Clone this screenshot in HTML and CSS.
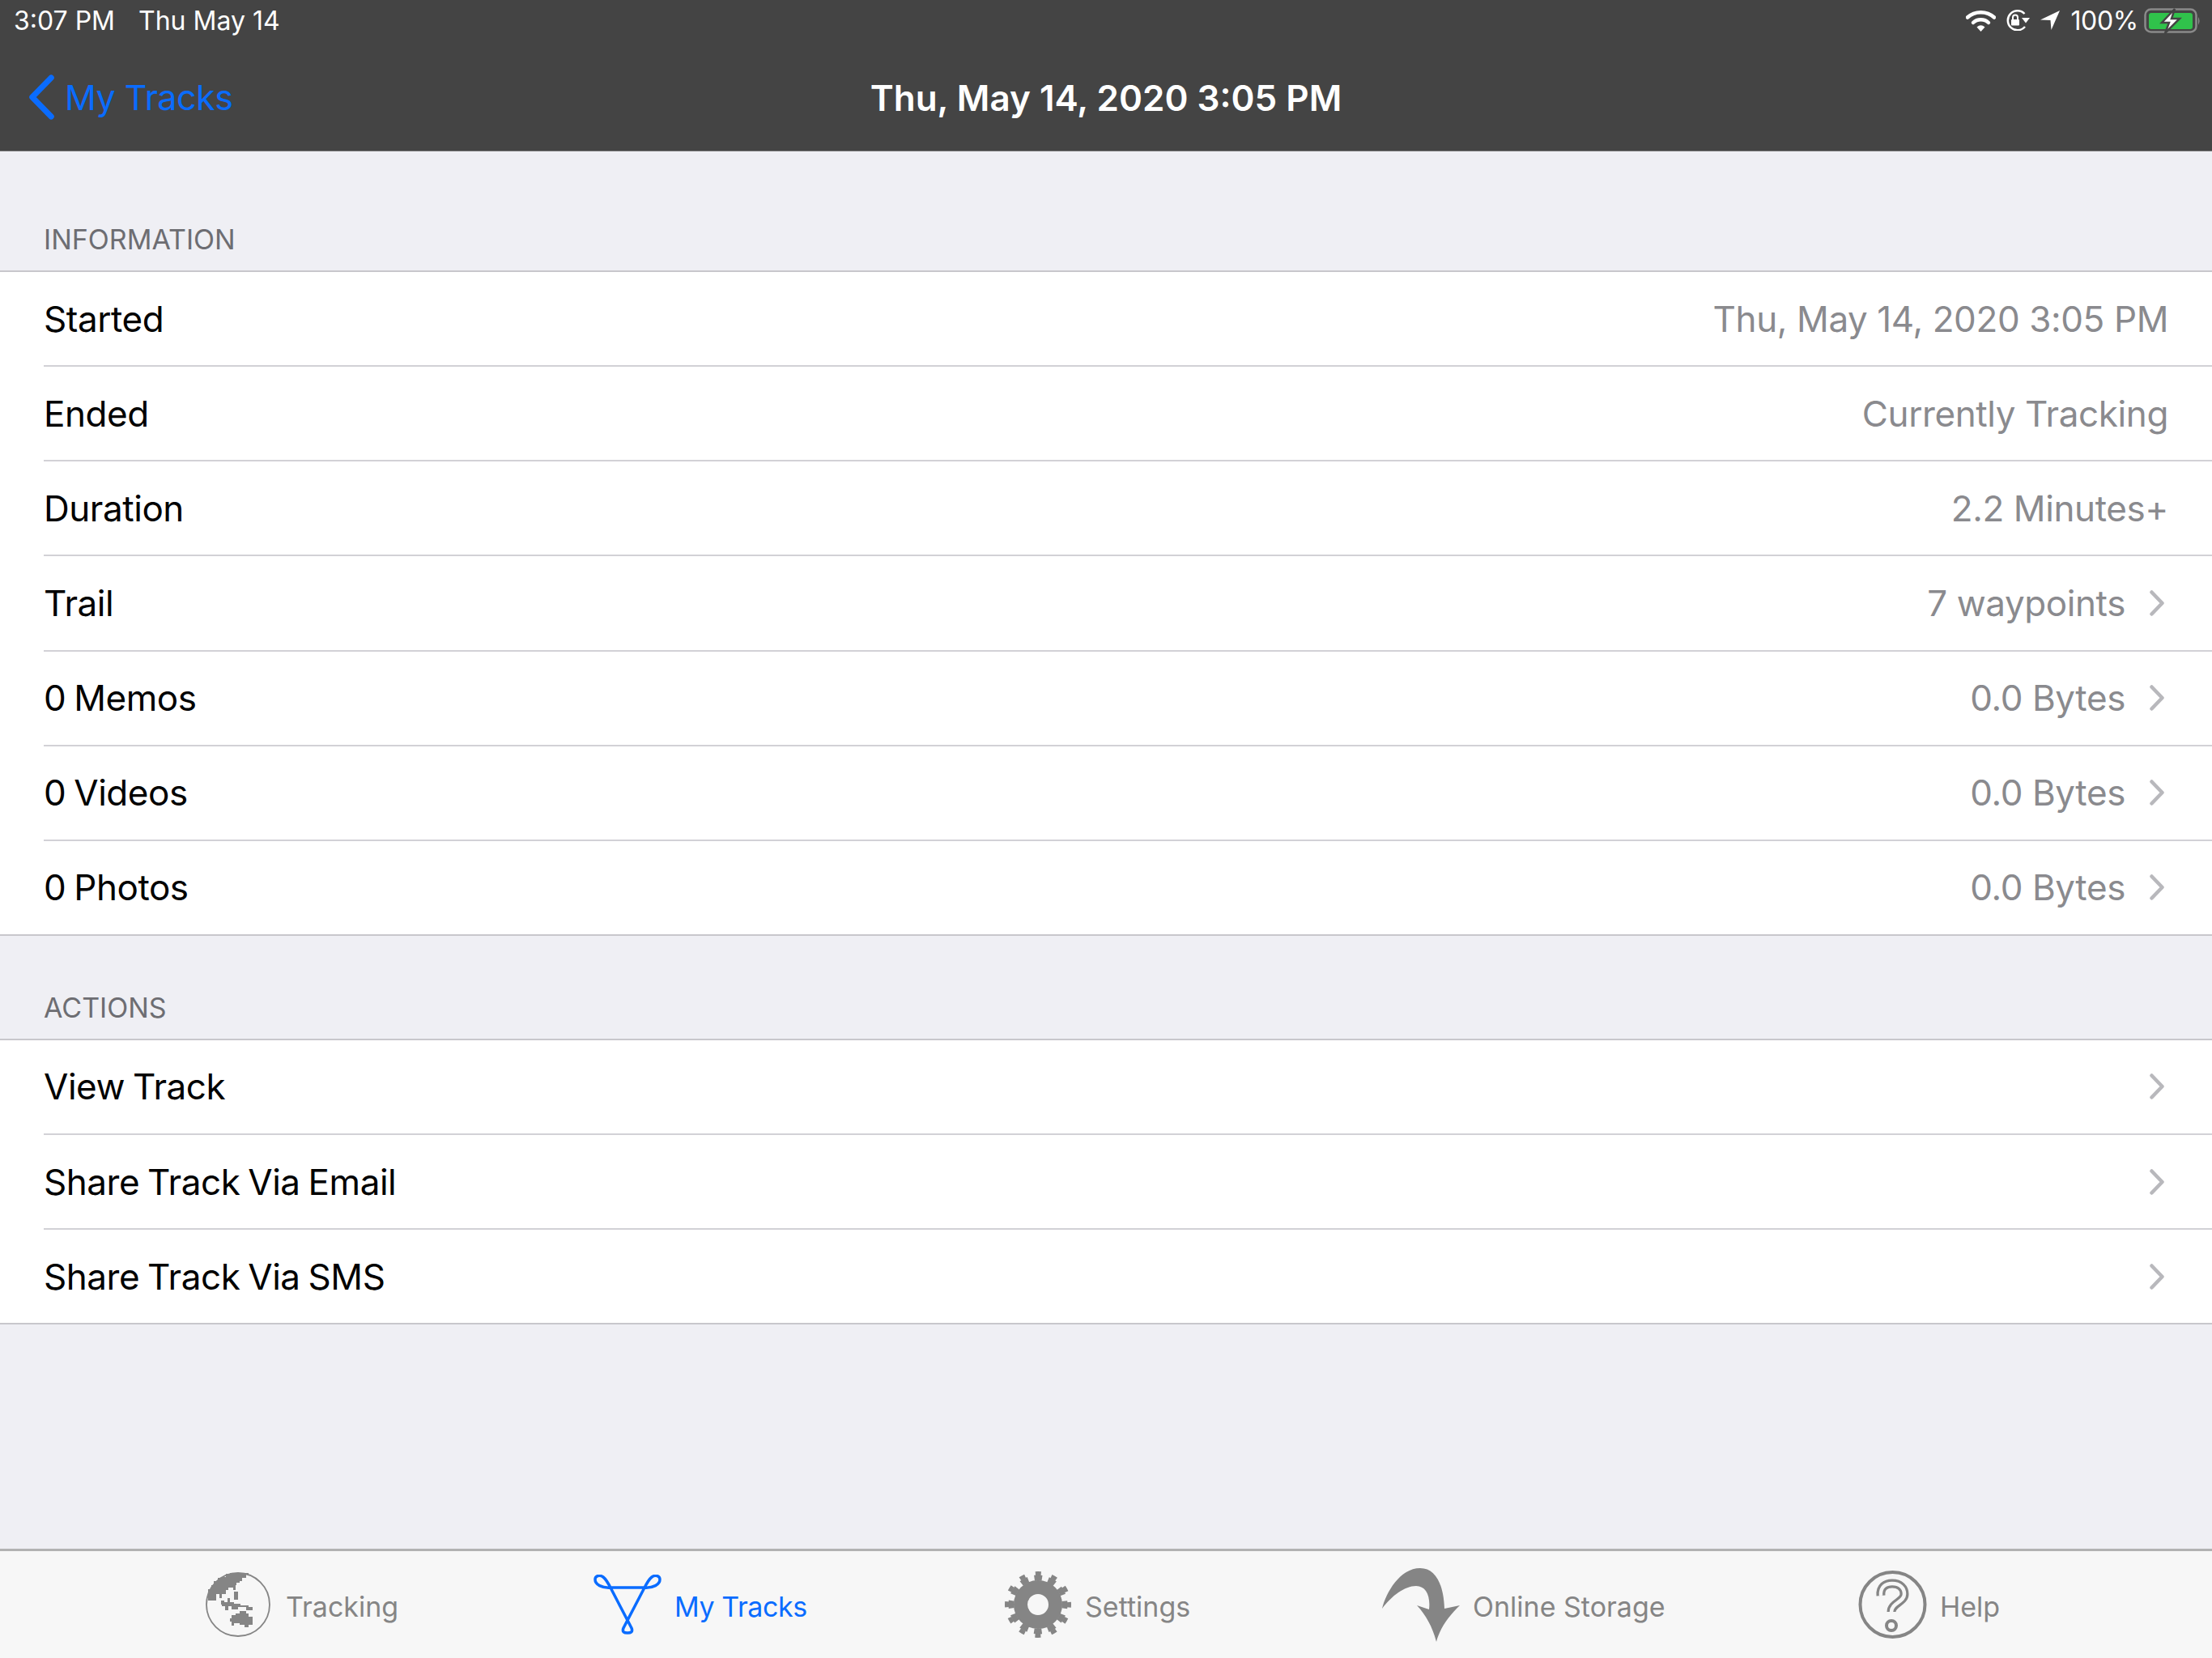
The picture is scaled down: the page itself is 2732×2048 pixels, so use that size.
FILE: index.html
```html
<!DOCTYPE html>
<html lang="en">
<head>
<meta charset="utf-8">
<title>Track</title>
<link rel="stylesheet" href="styles.css">
</head>
<body>
<div class="app">
  <header class="topbar">
    <div class="status">
      <div class="status-left"><span>3:07 PM</span><span>Thu May 14</span></div>
      <div class="status-right">
        <svg class="i-wifi" viewBox="0 0 37 27"><path d="M2 9.5C11 1 26 1 35 9.500" fill="none" stroke="#fff" stroke-width="4.500" stroke-linecap="round"/><path d="M9 16C14 11 23 11 28 16" fill="none" stroke="#fff" stroke-width="4.500" stroke-linecap="round"/><path d="M13.500 21.500Q18.500 17 23.500 21.500L18.500 27Z" fill="#fff"/></svg>
        <svg class="i-rot" viewBox="0 0 32 26"><path d="M24.500 5A12 12 0 1 0 25 21" fill="none" stroke="#fff" stroke-width="2.500"/><path d="M21 10H31L26 16.500Z" fill="#fff"/><rect x="8" y="12" width="10" height="7.500" rx="1" fill="#fff"/><path d="M10 12V9.500a3 3 0 0 1 6 0V12" fill="none" stroke="#fff" stroke-width="2"/></svg>
        <svg class="i-loc" viewBox="0 0 24 24"><path d="M24 0L0 11.500L12.500 12L13.500 24Z" fill="#fff"/></svg>
        <span class="pct">100%</span>
        <svg class="i-bat" viewBox="0 0 72 31"><rect x="1.500" y="1.500" width="63" height="28" rx="7" fill="none" stroke="#8a8a8a" stroke-width="2.500"/><rect x="6" y="6" width="54" height="20" rx="3" fill="#30c24b"/><path d="M67 11Q70 15.500 67 21Z" fill="#8a8a8a"/><path d="M38 1L22 18H31L26 31L44 13H34Z" fill="#fff" stroke="#444" stroke-width="2.500"/></svg>
      </div>
    </div>
    <nav class="navbar">
      <a class="back">
        <svg class="i-back" viewBox="0 0 32 55"><path d="M28 4L5 27.500L28 51" fill="none" stroke="#0a6cff" stroke-width="7" stroke-linecap="round" stroke-linejoin="round"/></svg>
        <span>My Tracks</span>
      </a>
      <h1 class="title">Thu, May 14, 2020 3:05 PM</h1>
    </nav>
  </header>

  <main class="content">
    <h2 class="sec sec-first">INFORMATION</h2>
    <section class="group">
      <div class="row"><div class="row-in"><span>Started</span><span class="val">Thu, May 14, 2020 3:05 PM</span></div></div>
      <div class="row"><div class="row-in"><span>Ended</span><span class="val">Currently Tracking</span></div></div>
      <div class="row"><div class="row-in"><span>Duration</span><span class="val">2.2 Minutes+</span></div></div>
      <div class="row"><div class="row-in"><span>Trail</span><span class="val">7 waypoints<svg class="chev" viewBox="0 0 18 32"><path d="M2.500 2.500L15.500 16L2.500 29.500" /></svg></span></div></div>
      <div class="row"><div class="row-in"><span>0 Memos</span><span class="val">0.0 Bytes<svg class="chev" viewBox="0 0 18 32"><path d="M2.500 2.500L15.500 16L2.500 29.500" /></svg></span></div></div>
      <div class="row"><div class="row-in"><span>0 Videos</span><span class="val">0.0 Bytes<svg class="chev" viewBox="0 0 18 32"><path d="M2.500 2.500L15.500 16L2.500 29.500" /></svg></span></div></div>
      <div class="row"><div class="row-in"><span>0 Photos</span><span class="val">0.0 Bytes<svg class="chev" viewBox="0 0 18 32"><path d="M2.500 2.500L15.500 16L2.500 29.500" /></svg></span></div></div>
    </section>
    <h2 class="sec">ACTIONS</h2>
    <section class="group">
      <div class="row"><div class="row-in"><span>View Track</span><span class="val"><svg class="chev" viewBox="0 0 18 32"><path d="M2.500 2.500L15.500 16L2.500 29.500" /></svg></span></div></div>
      <div class="row"><div class="row-in"><span>Share Track Via Email</span><span class="val"><svg class="chev" viewBox="0 0 18 32"><path d="M2.500 2.500L15.500 16L2.500 29.500" /></svg></span></div></div>
      <div class="row"><div class="row-in"><span>Share Track Via SMS</span><span class="val"><svg class="chev" viewBox="0 0 18 32"><path d="M2.500 2.500L15.500 16L2.500 29.500" /></svg></span></div></div>
    </section>
  </main>

  <footer class="tabbar">
    <div class="tab">
      <svg class="i-globe" viewBox="0 0 80 80"><circle cx="40" cy="40" r="39" fill="none" stroke="#858585" stroke-width="1.800"/><g fill="#858585" shape-rendering="crispEdges" transform="translate(-15 -22.700) scale(.3333)"><path d="M135 70H205V78H195V90H180V100H170V108H160V115H155V135H148V125H130V135H120V150H105V165H95V150H85V172H55V130H65V115H75V100H90V90H105V85H120V75H135Z"/><path d="M150 140H165V170H150Z"/><path d="M100 172H115V180H125V165H135V178H150V185H175V190H205V198H220V208H195V198H165V205H140V195H130V210H118V195H105Z"/><path d="M135 240H142V228H155V220H170V213H195V222H205V232H218V262H205V272H190V262H170V258H150V265H142V250H135Z"/></g></svg>
      <span>Tracking</span>
    </div>
    <div class="tab active">
      <svg class="i-tracks" viewBox="0 0 84 74"><path d="M22 16C10 17 2 12 2 6C2 1 8 0 12 3C16 6 18 10 22 18L47 66C49 71 46 72 42 72C38 72 35 71 37 66L62 18C66 10 68 6 72 3C76 0 82 1 82 6C82 12 74 17 62 16Z" fill="none" stroke="#0a6cff" stroke-width="3.500"/></svg>
      <span>My Tracks</span>
    </div>
    <div class="tab">
      <svg class="i-gear" viewBox="0 0 84 84"><circle cx="42" cy="42" r="21.500" fill="none" stroke="#858585" stroke-width="17"/><circle cx="42" cy="42" r="33" fill="none" stroke="#858585" stroke-width="7" stroke-dasharray="9.500 7.780" stroke-dashoffset="4.750"/><circle cx="42" cy="42" r="38.500" fill="none" stroke="#858585" stroke-width="5" stroke-dasharray="7 13.160" stroke-dashoffset="3.500"/></svg>
      <span>Settings</span>
    </div>
    <div class="tab">
      <svg class="i-arrow" viewBox="0 0 96 91"><path d="M0 50C5 30 22 0 47 0C66 0 76 20 77 50L96 46C84 58 72 72 67 91C62 72 54 58 43 46L58 51C60 34 54 22 42 22C28 22 12 34 0 50Z" fill="#858585"/></svg>
      <span>Online Storage</span>
    </div>
    <div class="tab">
      <svg class="i-help" viewBox="0 0 85 84"><circle cx="42.500" cy="42" r="40" fill="none" stroke="#858585" stroke-width="4"/><path d="M28 31C27 20 34 16 42 16C52 16 57 22 57 29C57 39 41 40 41 51" fill="none" stroke="#858585" stroke-width="11"/><path d="M28 31C27 20 34 16 42 16C52 16 57 22 57 29C57 39 41 40 41 51" fill="none" stroke="#f7f7f7" stroke-width="4.500"/><circle cx="41" cy="68" r="6" fill="#f7f7f7" stroke="#858585" stroke-width="4"/></svg>
      <span>Help</span>
    </div>
  </footer>
</div>
</body>
</html>
```
FILE: styles.css
```css
* { box-sizing: border-box; }
html, body { margin: 0; padding: 0; }
body { font-family: Inter, "Liberation Sans", sans-serif; background: #efeff4; color: #000; }
.app { width: 2732px; height: 2048px; display: flex; flex-direction: column; overflow: hidden; }

.topbar { height: 187px; background: #444444; border-bottom: 1px solid #777; flex: none; }
.status { height: 50px; padding: 0 12px 0 17px; display: flex; justify-content: space-between; align-items: center; color: #fff; font-size: 32px; }
.status-left { display: flex; gap: 29px; }
.status-right { display: flex; align-items: center; }
.i-wifi { width: 37px; height: 27px; margin-right: 11px; }
.i-rot { width: 32px; height: 26px; margin-right: 12px; }
.i-loc { width: 24px; height: 24px; margin-right: 13px; }
.pct { margin-right: 7px; letter-spacing: -0.3px; }
.i-bat { width: 72px; height: 31px; }

.navbar { height: 136px; padding-top: 6px; position: relative; display: flex; align-items: center; justify-content: center; }
.back { position: absolute; left: 32px; top: 42px; display: flex; align-items: center; gap: 10px; color: #0a6cff; font-size: 43px; letter-spacing: -0.5px; }
.i-back { width: 38px; height: 56px; }
.title { margin: 0; color: #fff; font-size: 44px; font-weight: 600; }

.content { flex: 1; }
.sec { margin: 0; height: 127px; padding: 0 0 18px 54px; display: flex; align-items: flex-end; color: #6d6d72; font-size: 34px; font-weight: 400; line-height: 40px; }
.sec-first { height: 147px; }
.group { background: #fff; border-top: 2px solid #c8c7cc; border-bottom: 2px solid #c8c7cc; }
.row { padding-left: 54px; font-size: 44px; letter-spacing: -0.45px; word-spacing: -2px; }
.row-in { height: 117.140px; padding-right: 54px; display: flex; align-items: center; justify-content: space-between; border-bottom: 2px solid #d2d1d6; }
.row:last-child .row-in { border-bottom: 0; height: 115.140px; }
.val { color: #8a8a8e; display: flex; align-items: center; letter-spacing: -0.4px; word-spacing: 0; }
.chev { width: 18px; height: 32px; margin-left: 30px; margin-right: 5px; fill: none; stroke: #b8b8bc; stroke-width: 4.500; stroke-linecap: round; stroke-linejoin: round; }

.tabbar { height: 135px; flex: none; background: #f7f7f7; border-top: 3px solid #b2b2b2; display: grid; grid-template-columns: 476px 510px 465px 590px 1fr; padding-left: 254px; align-items: center; }
.tab { display: flex; align-items: center; color: #858585; font-size: 34px; }
.tab span { padding-top: 5px; }
.tab.active { color: #0a6cff; letter-spacing: -0.4px; }
.i-globe { width: 80px; height: 80px; margin-right: 19px; }
.i-tracks { width: 84px; height: 74px; margin-right: 16px; margin-left: 3px; }
.i-gear { width: 84px; height: 84px; margin-right: 16px; }
.i-arrow { width: 96px; height: 91px; margin-right: 16px; margin-left: 2px; }
.i-help { width: 85px; height: 84px; margin-right: 16px; }
```
